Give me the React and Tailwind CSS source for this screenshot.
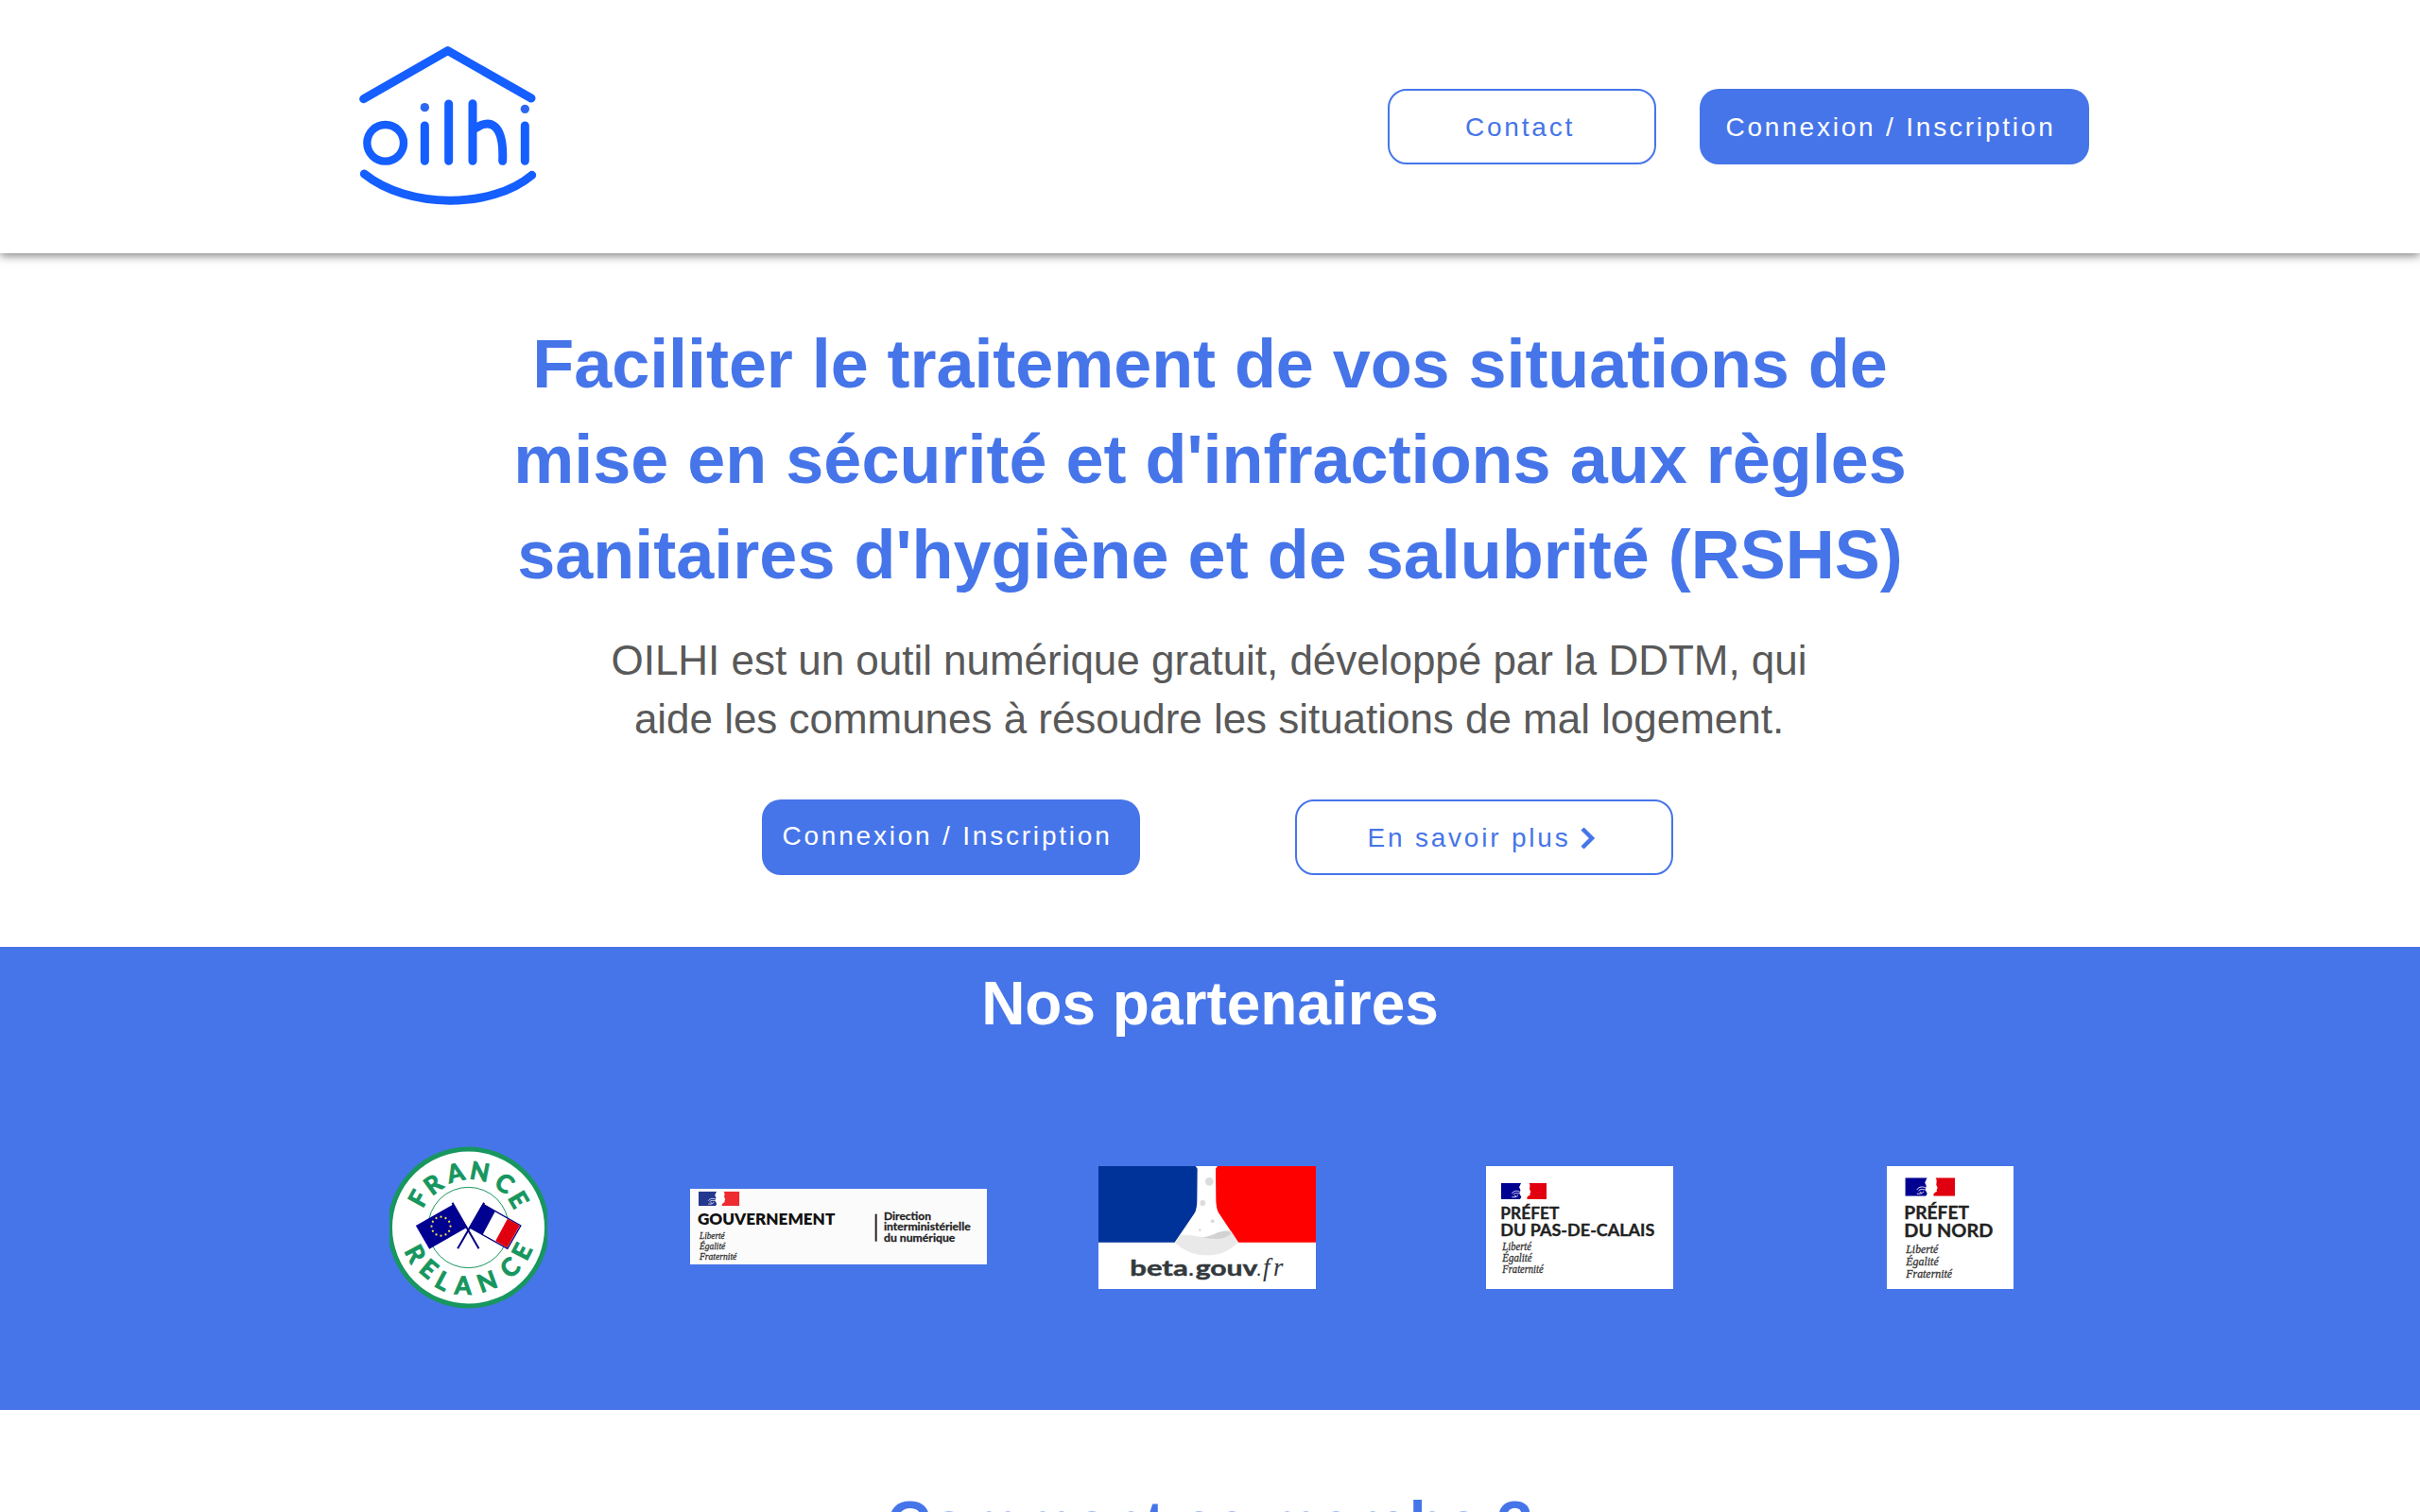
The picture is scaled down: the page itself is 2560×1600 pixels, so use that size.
const sans = "font-['Liberation_Sans',Arial,sans-serif]";
const button = "flex h-20 items-center justify-center rounded-[20px] text-[28px] leading-10 tracking-[2.8px] whitespace-nowrap";
const outline = "border-2 border-[#4675e9] bg-white text-[#4675e9]";
const solid = "bg-[#4675e9] text-white";

function OilhiLogo() {
  return (
    <svg viewBox="0 0 690 600" className="block h-[200px] w-[230px]" fill="none" stroke="#155eff" strokeWidth="27" strokeLinecap="round" strokeLinejoin="round" aria-label="oilhi">
      <path d="M74 224 L341 71 L606 222" />
      <path d="M76 462 C215 574 480 574 608 466" />
      <circle cx="143" cy="364" r="58" strokeWidth="25" />
      <path d="M268 309 V421 M344 240 V421 M420 239 V421 M586 309 V421" />
      <path d="M424 320 C476 284 520 302 515 421" />
      <circle cx="268" cy="251" r="14" fill="#2f68f0" stroke="none" />
      <circle cx="586" cy="256" r="14" fill="#2f68f0" stroke="none" />
    </svg>
  );
}

function Marianne({ x, y, width, height, blue = "#000091", red = "#e1000f" }) {
  return (
    <svg x={x} y={y} width={width} height={height} viewBox="0 0 144 52" preserveAspectRatio="none">
      <rect width="144" height="52" fill="#fff" />
      <path d="M0 0 H64 C60 4 61 9 57 13 C58 18 62 20 61 26 C56 32 61 40 64 45 L60 52 H0 Z" fill={blue} />
      <path d="M88 0 H144 V52 H83 C80 47 84 43 88 41 C93 41 92 37 91 34 L94 29 L90 20 C91 12 93 6 88 0 Z" fill={red} />
      <path d="M34 34 C40 24 52 25 59 28 M38 38 C44 30 53 34 60 34 M34 45 C40 47 49 46 54 39 M42 41 L47 42" stroke="#fff" strokeWidth="2.5" fill="none" />
    </svg>
  );
}

function Motto({ x, y, step, size, widths, fill = "#333" }) {
  return (
    <g fontFamily="'Liberation Serif', serif" fontStyle="italic" fontSize={size} fill={fill} stroke={fill} strokeWidth=".9">
      {["Liberté", "Égalité", "Fraternité"].map((word, i) => (
        <text key={word} x={x} y={y + i * step} textLength={widths[i]} lengthAdjust="spacingAndGlyphs">{word}</text>
      ))}
    </g>
  );
}

function ArcLetters({ letters }) {
  return letters.map(([char, x, y, angle], i) => (
    <text key={i} transform={`translate(${x} ${y}) rotate(${angle})`} y="28" textAnchor="middle">{char}</text>
  ));
}

const FRANCE = [["F", 127, 204, -61], ["R", 174, 159, -36], ["A", 245, 122, -14], ["N", 322, 118, 11], ["C", 401, 155, 35], ["E", 445, 207, 60]];
const RELANCE = [["R", 118, 379, 62], ["E", 161, 427, 40], ["L", 205, 465, 28], ["A", 269, 480, 2], ["N", 345, 467, -20], ["C", 418, 423, -42], ["E", 456, 372, -63]];
const STARS = Array.from({ length: 12 }, (_, i) => i * 30);

function FranceRelance() {
  return (
    <svg viewBox="36 38 500 516" className="block h-[172px] w-[167px]" aria-label="France Relance">
      <circle cx="286" cy="296" r="249" fill="#fff" stroke="#17965f" strokeWidth="15" />
      <circle cx="286" cy="296" r="128" fill="none" stroke="#17965f" strokeWidth="3" />
      <g fontFamily="Lato, sans-serif" fontWeight="700" fontSize="78" fill="#17965f" stroke="#17965f" strokeWidth="3">
        <ArcLetters letters={FRANCE} />
        <ArcLetters letters={RELANCE} />
      </g>
      <path d="M235 217 L319 363 M336 217 L252 363" stroke="#000080" strokeWidth="6" />
      <path d="M119 290 L239 222 L281 296 L162 364 Z" fill="#000091" />
      {STARS.map((angle) => (
        <circle key={angle} cx="199" cy="262" r="3.4" fill="#f3e04b" transform={`rotate(${angle} 199 292)`} />
      ))}
      <path d="M333 222 L452 290 L410 363 L290 296 Z" fill="#fff" stroke="#000080" strokeWidth="4" />
      <path d="M333 222 L371 244 L331 319 L290 296 Z" fill="#000091" />
      <path d="M410 268 L449 290 L409 360 L372 339 Z" fill="#e1000f" />
    </svg>
  );
}

function Gouvernement() {
  return (
    <svg viewBox="30 54 942 240" className="mb-0.5 block h-20 w-[314px]">
      <rect x="30" y="54" width="942" height="240" fill="#fbfbfb" />
      <Marianne x={57} y={62} width={130} height={46} blue="#24378f" red="#ed2b30" />
      <g fontFamily="Lato, sans-serif" fontWeight="800" fill="#111">
        <text x="54" y="167" fontSize="48" textLength="436" lengthAdjust="spacingAndGlyphs">GOUVERNEMENT</text>
        <g fontSize="34" fontWeight="700" fill="#222" stroke="#222" strokeWidth=".8">
          <text x="645" y="154" textLength="150" lengthAdjust="spacingAndGlyphs">Direction</text>
          <text x="645" y="187" textLength="275" lengthAdjust="spacingAndGlyphs">interministérielle</text>
          <text x="645" y="221" textLength="226" lengthAdjust="spacingAndGlyphs">du numérique</text>
        </g>
      </g>
      <rect x="617" y="134" width="6" height="87" fill="#2a2022" />
      <Motto x={60} y={214} step={32} size={33} widths={[80, 82, 118]} />
    </svg>
  );
}

function BetaGouv() {
  return (
    <svg viewBox="36 42 690 390" className="mr-1 block h-[130px] w-[230px]">
      <rect x="36" y="42" width="690" height="390" fill="#fff" />
      <path d="M36 42 H344 L350 50 L349 150 Q349 175 342 190 L278 284 H36 Z" fill="#003399" />
      <path d="M726 42 H414 L408 50 L409 150 Q410 178 417 190 L480 284 H726 Z" fill="#f00" />
      <path d="M278 284 L294 262 C330 254 350 272 390 266 C420 258 435 246 457 249 L480 284 C450 310 425 325 381 325 C340 325 307 311 278 284 Z" fill="#e9e9e9" />
      <path d="M365 268 C405 264 415 244 450 248 L457 257 C430 278 400 275 365 268 Z" fill="#d2d2d2" />
      <g fill="#dcdcdc">
        <circle cx="388" cy="91" r="13" />
        <circle cx="367" cy="159" r="9" />
        <circle cx="398" cy="217" r="6" />
        <circle cx="358" cy="245" r="4" />
      </g>
      <g fill="#33393d">
        <g fontFamily="Lato, sans-serif" fontWeight="700" fontSize="70" stroke="#33393d" strokeWidth="1.5">
          <text x="136" y="390" textLength="184" lengthAdjust="spacingAndGlyphs">beta</text>
          <text x="322" y="390" fontWeight="400">.</text>
          <text x="344" y="390" textLength="197" lengthAdjust="spacingAndGlyphs">gouv</text>
        </g>
        <text x="537" y="390" fontFamily="'Liberation Serif', serif" fontSize="60">.</text>
        <text x="558" y="390" fontFamily="'Liberation Serif', serif" fontStyle="italic" fontSize="80" textLength="64" lengthAdjust="spacing">fr</text>
      </g>
    </svg>
  );
}

function PrefetPasDeCalais() {
  return (
    <svg viewBox="36 42 594 390" className="block h-[130px] w-[198px]">
      <rect x="36" y="42" width="594" height="390" fill="#fff" />
      <Marianne x={84} y={95} width={144} height={52} />
      <g fontFamily="Lato, sans-serif" fontWeight="700" fontSize="49" fill="#222" stroke="#222" strokeWidth="1">
        <text x="82" y="211" textLength="186" lengthAdjust="spacingAndGlyphs">PRÉFET</text>
        <text x="82" y="265" textLength="489" lengthAdjust="spacingAndGlyphs">DU PAS-DE-CALAIS</text>
      </g>
      <Motto x={88} y={308} step={36} size={37} widths={[92, 94, 130]} />
    </svg>
  );
}

function PrefetNord() {
  return (
    <svg viewBox="48 42 402 390" className="block h-[130px] w-[134px]">
      <rect x="48" y="42" width="402" height="390" fill="#fff" />
      <Marianne x={106} y={79} width={158} height={58} />
      <g fontFamily="Lato, sans-serif" fontWeight="700" fontSize="55" fill="#222" stroke="#222" strokeWidth="1">
        <text x="103" y="209" textLength="206" lengthAdjust="spacingAndGlyphs">PRÉFET</text>
        <text x="103" y="268" textLength="282" lengthAdjust="spacingAndGlyphs">DU NORD</text>
      </g>
      <Motto x={109} y={317} step={40} size={40} widths={[102, 103, 146]} />
    </svg>
  );
}

export default function App() {
  return (
    <div className={`h-[1600px] w-[2560px] overflow-hidden bg-white ${sans}`}>
      <header className="relative flex h-[268px] items-start justify-between bg-white pr-[350px] pl-[360px] shadow-[0_2px_10px_rgba(0,0,0,0.55)]">
        <div className="pt-[30px]">
          <OilhiLogo />
        </div>
        <nav className="flex gap-[46px] pt-[94px]">
          <a className={`${button} ${outline} w-[284px] pt-0.5 pr-1`}>Contact</a>
          <a className={`${button} ${solid} w-[412px] pt-0.5 pr-2`}>Connexion / Inscription</a>
        </nav>
      </header>

      <section className="flex h-[734px] flex-col items-center pt-[67px] text-center">
        <h1 className="text-[72px] leading-[100.8px] font-bold text-[#4675e9]">
          <span className="tracking-[-0.07px]">Faciliter le traitement de vos situations de</span>
          <br />
          mise en sécurité et d'infractions aux règles
          <br />
          sanitaires d'hygiène et de salubrité (RSHS)
        </h1>
        <p className="mt-[31px] mr-0.5 text-[44px] leading-[61.6px] tracking-[-0.03px] text-[#595959]">
          OILHI est un outil numérique gratuit, développé par la DDTM, qui
          <br />
          aide les communes à résoudre les situations de mal logement.
        </p>
        <div className="mt-[54px] ml-4 flex gap-[164px]">
          <a className={`${button} ${solid} w-[400px] pr-2 pb-0.5`}>Connexion / Inscription</a>
          <a className={`${button} ${outline} w-[400px] pt-0.5 pr-1.5`}>
            En savoir plus
            <svg viewBox="0 0 16 24" className="ml-2.5 h-6 w-4" fill="none" stroke="#4675e9" strokeWidth="4.5">
              <path d="M2 2 L12 12 L2 22" />
            </svg>
          </a>
        </div>
      </section>

      <section className="flex h-[490px] flex-col bg-[#4675e9] pt-4">
        <h2 className="text-center text-[64px] leading-[89.6px] font-bold text-white">Nos partenaires</h2>
        <div className="mt-[105.4px] ml-[299px] grid h-[172px] w-[1960px] grid-cols-5 place-items-center">
          <FranceRelance />
          <Gouvernement />
          <BetaGouv />
          <PrefetPasDeCalais />
          <PrefetNord />
        </div>
      </section>

      <section className="pt-[76px]">
        <h2 className="text-center text-[64px] leading-[89.6px] font-bold tracking-[-0.15px] text-[#4675e9]">Comment ça marche ?</h2>
      </section>
    </div>
  );
}
